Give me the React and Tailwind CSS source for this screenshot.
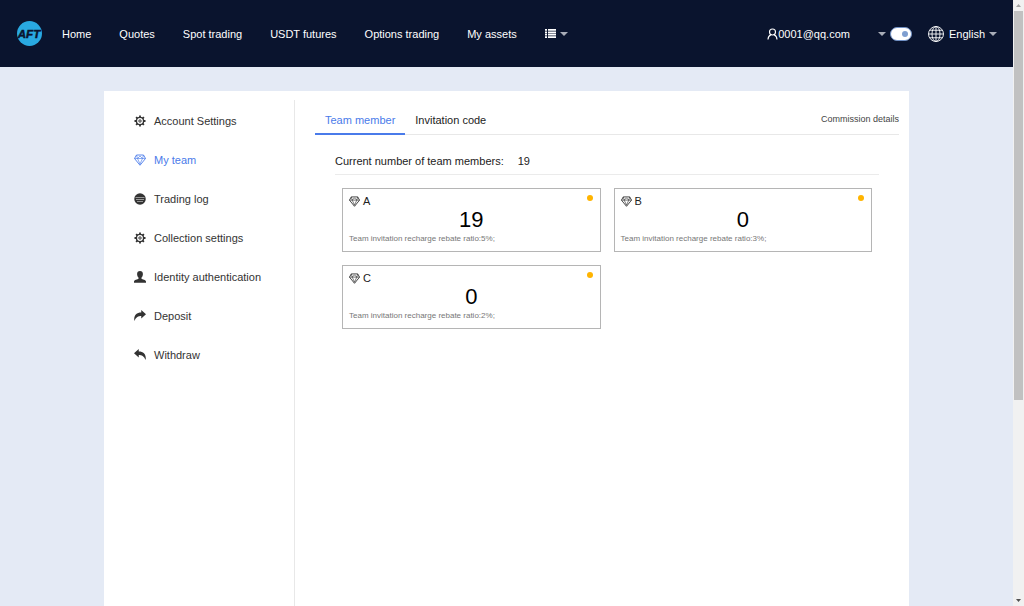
import { useState } from 'react';
import clsx from 'clsx';

const navLinks = ['Home', 'Quotes', 'Spot trading', 'USDT futures', 'Options trading', 'My assets'];

const levels = [
  { name: 'A', count: 19, ratio: 5 },
  { name: 'B', count: 0, ratio: 3 },
  { name: 'C', count: 0, ratio: 2 },
];

function Diamond({ className }) {
  return (
    <svg className={className} viewBox="0 0 24 24" fill="none" stroke="currentColor" strokeWidth="1.8" strokeLinejoin="round">
      <path d="M5 2h14l4 7-11 13.500L1 9z" />
      <path d="M5 2l2 7 5-5 5 5 2-7M1 9h6l5 11 5-11h6M7 9h10" strokeWidth="1.300" />
    </svg>
  );
}

function Gear({ className }) {
  return (
    <svg className={className} viewBox="0 0 24 24" fill="none" stroke="currentColor">
      <circle cx="12" cy="12" r="7.200" strokeWidth="2.800" />
      <circle cx="12" cy="12" r="2.400" strokeWidth="2" />
      <path
        d="M12 1v4M12 19v4M1 12h4M19 12h4M4.200 4.200l2.800 2.800M17 17l2.800 2.800M4.200 19.800l2.800-2.800M17 7l2.800-2.800"
        strokeWidth="3.600"
      />
    </svg>
  );
}

function Log({ className }) {
  return (
    <svg className={className} viewBox="0 0 24 24">
      <circle cx="12" cy="12" r="11.500" fill="currentColor" />
      <path d="M3 9h18M4 13h16M6 17h12" stroke="#b8b8b8" strokeWidth="1.500" />
    </svg>
  );
}

function Person({ className }) {
  return (
    <svg className={className} viewBox="0 0 24 24" fill="currentColor">
      <path d="M12 0c3.800 0 5.800 2.500 5.800 5.800 0 2.900-1 5.600-2.800 7.200v2.500c1.500 1.300 9 2 9 5.500v2.500H0V21c0-3.500 7.500-4.200 9-5.500V13C7.200 11.400 6.200 8.700 6.200 5.800 6.200 2.500 8.200 0 12 0z" />
    </svg>
  );
}

function ArrowRight({ className }) {
  return (
    <svg className={className} viewBox="0 0 24 24" fill="currentColor">
      <path d="M14.500 0L24 8.500 14.500 17v-5C8.500 12 4 14 .8 22-1 12 4 5 14.500 5z" />
    </svg>
  );
}

function ArrowLeft({ className }) {
  return (
    <svg className={className} viewBox="0 0 24 24" fill="currentColor">
      <path d="M9.500 0L0 8.500 9.500 17v-5c6 0 10.500 2 13.700 10C25 12 20 5 9.500 5z" />
    </svg>
  );
}

function Caret() {
  return (
    <svg className="h-1 w-2 text-[#a9adb8]" viewBox="0 0 8 4" fill="currentColor">
      <path d="M0 0h8L4 4z" />
    </svg>
  );
}

function Logo() {
  return (
    <svg className="h-[25px] w-[25px]" viewBox="0 0 50 50">
      <circle cx="25" cy="25" r="25" fill="#29a9e1" />
      <text
        x="24"
        y="33"
        textAnchor="middle"
        fontFamily="Liberation Sans, sans-serif"
        fontSize="23"
        fontWeight="bold"
        fontStyle="italic"
        fill="#0a142e"
        stroke="#0a142e"
        strokeWidth="1"
      >
        AFT
      </text>
    </svg>
  );
}

const menu = [
  { label: 'Account Settings', icon: Gear },
  { label: 'My team', icon: Diamond },
  { label: 'Trading log', icon: Log },
  { label: 'Collection settings', icon: Gear },
  { label: 'Identity authentication', icon: Person },
  { label: 'Deposit', icon: ArrowRight },
  { label: 'Withdraw', icon: ArrowLeft },
];

function Header({ light, onToggle }) {
  return (
    <header className="flex h-[67px] items-center bg-[#0a142e] pr-4 pl-[17px] text-white">
      <a href="#home" aria-label="AFT">
        <Logo />
      </a>
      <nav className="ml-5 flex items-center gap-7">
        {navLinks.map((label) => (
          <a key={label} href="#nav" className="whitespace-nowrap">
            {label}
          </a>
        ))}
        <button type="button" aria-label="More" className="flex items-center gap-1">
          <svg className="h-[9px] w-[11px]" viewBox="0 0 11 9" fill="currentColor">
            <path d="M0 0h2v1.800H0zM3 0h8v1.800H3zM0 2.400h2v1.800H0zM3 2.400h8v1.800H3zM0 4.800h2v1.800H0zM3 4.800h8v1.800H3zM0 7.200h2V9H0zM3 7.200h8V9H3z" />
          </svg>
          <Caret />
        </button>
      </nav>

      <div className="ml-auto flex items-center">
        <button type="button" className="flex items-center">
          <svg className="h-3 w-[11px]" viewBox="0 0 22 24" fill="none" stroke="currentColor" strokeWidth="2.200">
            <circle cx="11" cy="8" r="6" />
            <path d="M2 23c0-5 2.500-8 6-9.500M20 23c0-5-2.500-8-6-9.500" />
          </svg>
          <span className="mr-7">0001@qq.com</span>
          <Caret />
        </button>
        <button
          type="button"
          role="switch"
          aria-label="Theme"
          aria-checked={light}
          onClick={onToggle}
          className={clsx(
            'ml-1 flex h-[14px] w-[22px] items-center rounded-full border border-[#6f8fc4] bg-white px-[3px]',
            light ? 'justify-end' : 'justify-start'
          )}
        >
          <span className="h-[6px] w-[6px] rounded-full bg-[#7f9fd0]" />
        </button>
        <button type="button" className="ml-4 flex items-center">
          <svg className="h-4 w-4" viewBox="0 0 32 32" fill="none" stroke="currentColor" strokeWidth="1.800">
            <circle cx="16" cy="16" r="15" />
            <ellipse cx="16" cy="16" rx="8" ry="15" />
            <path d="M16 1v30M1 16h30M4 8.500h24M4 23.500h24" />
          </svg>
          <span className="mr-1 ml-[5px]">English</span>
          <Caret />
        </button>
      </div>
    </header>
  );
}

function LevelCard({ level }) {
  return (
    <div className="relative border border-[#b5b5b5] px-[6px] pt-1 pb-1">
      <div className="flex items-center gap-[3px] leading-4 text-[#222]">
        <Diamond className="h-[11px] w-[11px]" />
        {level.name}
      </div>
      <div className="text-center text-[22px] leading-[22px] text-black">{level.count}</div>
      <div className="text-[8px] leading-4 text-[#777]">
        Team invitation recharge rebate ratio:{level.ratio}%;
      </div>
      <span className="absolute top-[6px] right-[7px] h-[6px] w-[6px] rounded-full bg-[#ffb400]" />
    </div>
  );
}

function Scrollbar() {
  return (
    <div className="flex w-[11px] shrink-0 flex-col items-center justify-between bg-[#f1f1f1]" aria-hidden="true">
      <svg className="h-[11px] w-[11px] shrink-0" viewBox="0 0 11 11" fill="#a3a3a3">
        <path d="M3 7l2.500-3L8 7z" />
      </svg>
      <div className="w-[9px] grow-2 bg-[#c1c1c1]" />
      <div className="grow" />
      <svg className="h-[11px] w-[11px] shrink-0" viewBox="0 0 11 11" fill="#505050">
        <path d="M3 4l2.500 3L8 4z" />
      </svg>
    </div>
  );
}

export default function App() {
  const [light, setLight] = useState(true);
  const [active, setActive] = useState('My team');
  const [tab, setTab] = useState('Team member');

  return (
    <div className="flex min-h-screen bg-[#e4eaf5] font-['Liberation_Sans',Arial,sans-serif] text-[11px] leading-4">
      <div className="flex min-w-0 flex-1 flex-col">
        <Header light={light} onToggle={() => setLight(!light)} />

        <div className="mx-auto mt-6 flex w-full max-w-[805px] flex-1 bg-white pt-[9px]">
          <ul className="w-[191px] shrink-0 border-r border-[#e8e8e8] pt-px pl-[30px]">
            {menu.map(({ label, icon: Icon }) => (
              <li key={label}>
                <button
                  type="button"
                  onClick={() => setActive(label)}
                  className={clsx(
                    'flex h-[39px] items-center gap-2',
                    active === label ? 'text-[#4a7bea]' : 'text-[#333]'
                  )}
                >
                  <Icon className="h-3 w-3" />
                  {label}
                </button>
              </li>
            ))}
          </ul>

          <main className="min-w-0 flex-1 pr-[10px] pl-5">
            <div className="flex items-center justify-between border-b border-[#e8e8e8] pt-1">
              <div className="flex" role="tablist">
                {['Team member', 'Invitation code'].map((name) => (
                  <button
                    key={name}
                    type="button"
                    role="tab"
                    aria-selected={tab === name}
                    onClick={() => setTab(name)}
                    className={clsx(
                      '-mb-px h-[31px] border-b-2 px-[10px] pt-[2px]',
                      tab === name ? 'border-[#4a7bea] text-[#4a7bea]' : 'border-transparent text-[#222]'
                    )}
                  >
                    {name}
                  </button>
                ))}
              </div>
              <a href="#commission" className="text-[9px] text-[#444]">
                Commission details
              </a>
            </div>

            <section className="px-5">
              <p className="flex gap-[14px] border-b border-[#ebebeb] pt-[18px] pb-[5px] text-[#222]">
                <span>Current number of team members:</span>
                <span>19</span>
              </p>
              <div className="grid grid-cols-2 gap-[13px] px-[7px] pt-[13px]">
                {levels.map((level) => (
                  <LevelCard key={level.name} level={level} />
                ))}
              </div>
            </section>
          </main>
        </div>
      </div>
      <Scrollbar />
    </div>
  );
}
